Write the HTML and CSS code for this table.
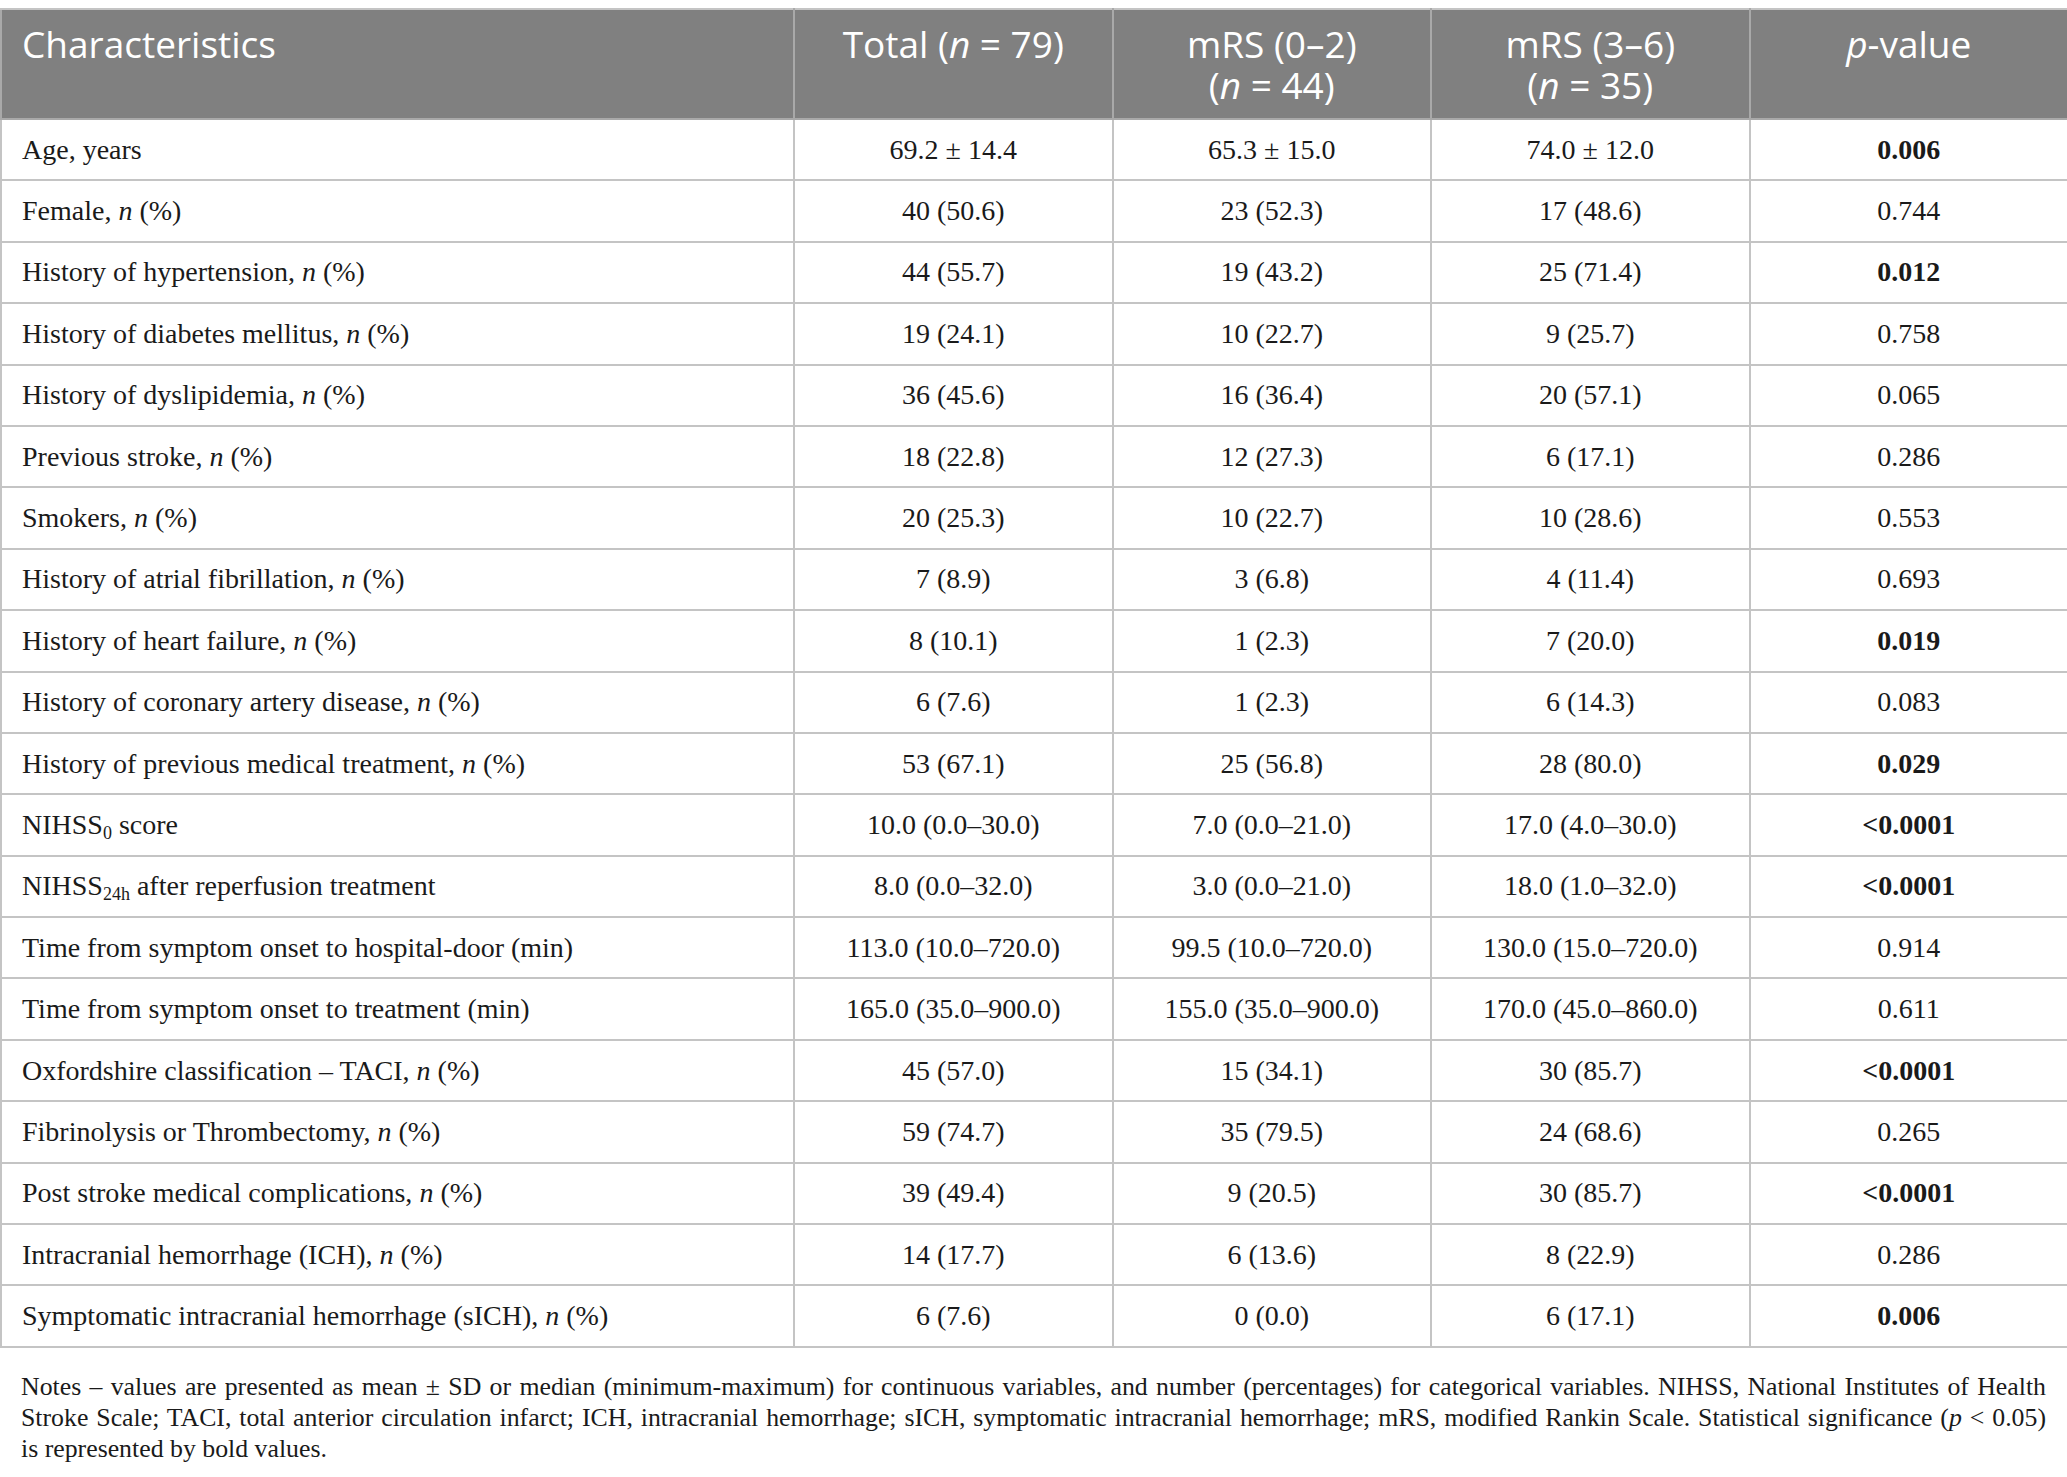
FILE: index.html
```html
<!DOCTYPE html>
<html lang="en">
<head>
<meta charset="utf-8">
<title>Table</title>
<link rel="stylesheet" href="styles.css">
</head>
<body>
<div class="page">
<table class="data">
  <colgroup>
    <col class="c-label">
    <col class="c-num">
    <col class="c-num">
    <col class="c-num">
    <col class="c-num">
  </colgroup>
  <thead>
    <tr>
      <th class="left">Characteristics</th>
      <th>Total (<i>n</i> = 79)</th>
      <th>mRS (0–2)<br>(<i>n</i> = 44)</th>
      <th>mRS (3–6)<br>(<i>n</i> = 35)</th>
      <th><i>p</i>-value</th>
    </tr>
  </thead>
  <tbody>
    <tr><td>Age, years</td><td>69.2 ± 14.4</td><td>65.3 ± 15.0</td><td>74.0 ± 12.0</td><td class="b">0.006</td></tr>
    <tr><td>Female, <i>n</i> (%)</td><td>40 (50.6)</td><td>23 (52.3)</td><td>17 (48.6)</td><td>0.744</td></tr>
    <tr><td>History of hypertension, <i>n</i> (%)</td><td>44 (55.7)</td><td>19 (43.2)</td><td>25 (71.4)</td><td class="b">0.012</td></tr>
    <tr><td>History of diabetes mellitus, <i>n</i> (%)</td><td>19 (24.1)</td><td>10 (22.7)</td><td>9 (25.7)</td><td>0.758</td></tr>
    <tr><td>History of dyslipidemia, <i>n</i> (%)</td><td>36 (45.6)</td><td>16 (36.4)</td><td>20 (57.1)</td><td>0.065</td></tr>
    <tr><td>Previous stroke, <i>n</i> (%)</td><td>18 (22.8)</td><td>12 (27.3)</td><td>6 (17.1)</td><td>0.286</td></tr>
    <tr><td>Smokers, <i>n</i> (%)</td><td>20 (25.3)</td><td>10 (22.7)</td><td>10 (28.6)</td><td>0.553</td></tr>
    <tr><td>History of atrial fibrillation, <i>n</i> (%)</td><td>7 (8.9)</td><td>3 (6.8)</td><td>4 (11.4)</td><td>0.693</td></tr>
    <tr><td>History of heart failure, <i>n</i> (%)</td><td>8 (10.1)</td><td>1 (2.3)</td><td>7 (20.0)</td><td class="b">0.019</td></tr>
    <tr><td>History of coronary artery disease, <i>n</i> (%)</td><td>6 (7.6)</td><td>1 (2.3)</td><td>6 (14.3)</td><td>0.083</td></tr>
    <tr><td>History of previous medical treatment, <i>n</i> (%)</td><td>53 (67.1)</td><td>25 (56.8)</td><td>28 (80.0)</td><td class="b">0.029</td></tr>
    <tr><td>NIHSS<sub>0</sub> score</td><td>10.0 (0.0–30.0)</td><td>7.0 (0.0–21.0)</td><td>17.0 (4.0–30.0)</td><td class="b">&lt;0.0001</td></tr>
    <tr><td>NIHSS<sub>24h</sub> after reperfusion treatment</td><td>8.0 (0.0–32.0)</td><td>3.0 (0.0–21.0)</td><td>18.0 (1.0–32.0)</td><td class="b">&lt;0.0001</td></tr>
    <tr><td>Time from symptom onset to hospital-door (min)</td><td>113.0 (10.0–720.0)</td><td>99.5 (10.0–720.0)</td><td>130.0 (15.0–720.0)</td><td>0.914</td></tr>
    <tr><td>Time from symptom onset to treatment (min)</td><td>165.0 (35.0–900.0)</td><td>155.0 (35.0–900.0)</td><td>170.0 (45.0–860.0)</td><td>0.611</td></tr>
    <tr><td>Oxfordshire classification – TACI, <i>n</i> (%)</td><td>45 (57.0)</td><td>15 (34.1)</td><td>30 (85.7)</td><td class="b">&lt;0.0001</td></tr>
    <tr><td>Fibrinolysis or Thrombectomy, <i>n</i> (%)</td><td>59 (74.7)</td><td>35 (79.5)</td><td>24 (68.6)</td><td>0.265</td></tr>
    <tr><td>Post stroke medical complications, <i>n</i> (%)</td><td>39 (49.4)</td><td>9 (20.5)</td><td>30 (85.7)</td><td class="b">&lt;0.0001</td></tr>
    <tr><td>Intracranial hemorrhage (ICH), <i>n</i> (%)</td><td>14 (17.7)</td><td>6 (13.6)</td><td>8 (22.9)</td><td>0.286</td></tr>
    <tr><td>Symptomatic intracranial hemorrhage (sICH), <i>n</i> (%)</td><td>6 (7.6)</td><td>0 (0.0)</td><td>6 (17.1)</td><td class="b">0.006</td></tr>
  </tbody>
</table>
<p class="notes"><span class="line">Notes – values are presented as mean ± SD or median (minimum-maximum) for continuous variables, and number (percentages) for categorical variables. NIHSS, National Institutes of Health</span><span class="line">Stroke Scale; TACI, total anterior circulation infarct; ICH, intracranial hemorrhage; sICH, symptomatic intracranial hemorrhage; mRS, modified Rankin Scale. Statistical significance (<i>p</i> &lt; 0.05)</span><span class="line last">is represented by bold values.</span></p>
</div>
</body>
</html>
```

FILE: styles.css
```css
html, body {
  margin: 0;
  padding: 0;
  background: #ffffff;
}

.page {
  padding-top: 8px;
}

.data {
  width: 2067px;
  border-collapse: collapse;
  table-layout: fixed;
  font-family: "Liberation Serif", "Times New Roman", serif;
  color: #1a1a1a;
}

.c-label { width: 793px; }
.c-num { width: 318.5px; }

.data th {
  background: #808080;
  color: #ffffff;
  font-family: "Open Sans", "Noto Sans", sans-serif;
  font-weight: 400;
  font-size: 37px;
  line-height: 41px;
  text-align: center;
  vertical-align: top;
  padding: 13px 10px 0 10px;
  height: 95px;
  border: 2px solid #a9a9a9;
  border-top-color: #c4c4c4;
}

.data th.left {
  text-align: left;
  padding-left: 20px;
}

.data td {
  font-size: 28px;
  line-height: 30px;
  height: 59.4px;
  padding: 0 10px;
  text-align: center;
  vertical-align: middle;
  border: 2px solid #c4c4c4;
}

.data td:first-child {
  text-align: left;
  padding-left: 20px;
}

.data td.b {
  font-weight: bold;
}

.data sub {
  font-size: 18px;
  line-height: 0;
  vertical-align: -5px;
}

.notes {
  margin: 23px 0 0 0;
  padding: 0 21px;
  font-family: "Liberation Serif", "Times New Roman", serif;
  font-size: 25.8px;
  line-height: 31px;
  color: #1a1a1a;
}

.notes .line {
  display: block;
  white-space: nowrap;
  text-align: justify;
  text-align-last: justify;
}

.notes .line.last {
  text-align: left;
  text-align-last: left;
}
```
